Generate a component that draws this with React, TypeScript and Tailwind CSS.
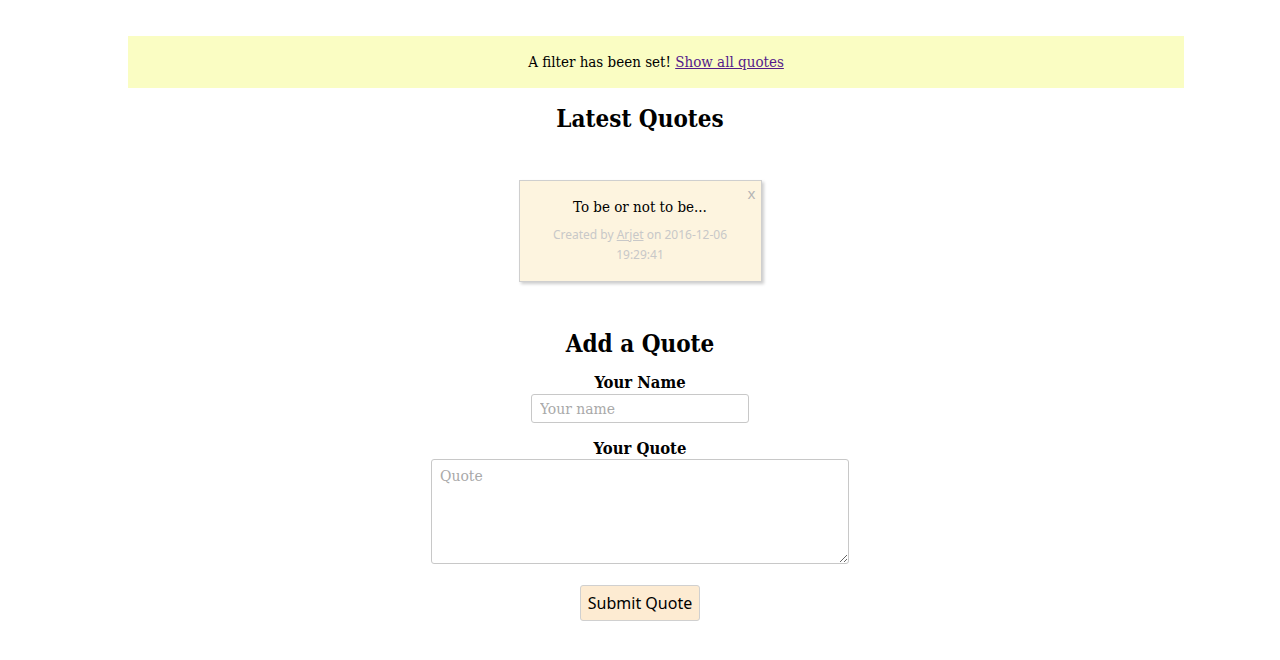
import React from "react";

export default function App() {
  const serif = { fontFamily: '"DejaVu Serif Condensed", "DejaVu Serif", "Liberation Serif", serif' };
  return (
    <div className="w-[1280px] h-[660px] bg-white text-black" style={serif}>
      <div className="h-[36px]" />
      <div className="ml-[128px] w-[1056px] h-[52px] bg-[#fafdc3] flex items-center justify-center text-[15px]">
        <span>
          A filter has been set!{" "}
          <a href="#" className="underline text-[#551a8b]">Show all quotes</a>
        </span>
      </div>
      <div className="flex flex-col items-center">
        <h1 className="mt-[16px] text-[24px] font-bold leading-[30px]">Latest Quotes</h1>
        <div className="mt-[46px] relative w-[243px] h-[102px] bg-[#fdf4df] border border-[#cfcfcf] shadow-[2px_2px_3px_rgba(0,0,0,0.2)] flex flex-col items-center">
          <span className="absolute right-[5px] top-[1px] text-[#b5b5b5] text-[15px]" style={{ fontFamily: '"Noto Sans", sans-serif' }}>x</span>
          <div className="mt-[15px] text-[15px] leading-[22px]">To be or not to be...</div>
          <div className="mt-[7px] text-[12px] leading-[20px] text-[#c8c8c8] text-center flex flex-col items-center" style={{ fontFamily: '"Noto Sans", sans-serif' }}>
            <div>Created by <a href="#" className="underline">Arjet</a> on 2016-12-06</div>
            <div>19:29:41</div>
          </div>
        </div>
        <h2 className="mt-[47px] text-[24px] font-bold leading-[30px]">Add a Quote</h2>
        <label className="mt-[15px] text-[16.5px] font-bold leading-[18px]">Your Name</label>
        <input
          placeholder="Your name"
          className="mt-[2px] w-[218px] h-[29px] border border-[#c8c8c8] rounded-[3px] px-[8px] text-[15.5px] placeholder:text-[#a9a9a9] outline-none"
          style={serif}
        />
        <label className="mt-[17px] text-[16.5px] font-bold leading-[18px]">Your Quote</label>
        <textarea
          placeholder="Quote"
          className="mt-[1px] w-[418px] h-[105px] border border-[#c8c8c8] rounded-[3px] px-[8px] py-[5px] text-[15.5px] placeholder:text-[#a9a9a9] outline-none"
          style={serif}
        />
        <button
          className="mt-[21px] w-[120px] h-[36px] bg-[#fdebd2] border border-[#d0d0d0] rounded-[3px] text-[16px] text-black"
          style={{ fontFamily: '"Noto Sans", sans-serif' }}
        >
          Submit Quote
        </button>
      </div>
    </div>
  );
}
